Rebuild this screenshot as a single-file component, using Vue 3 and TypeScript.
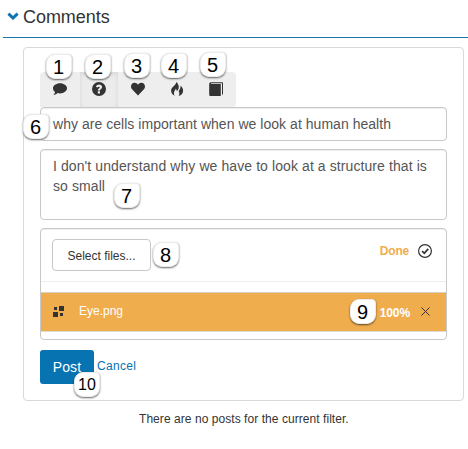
<script setup lang="ts">
import { ref } from 'vue'

interface PostType {
  label: string
  path: string
  step: number
}

const postTypes: PostType[] = [
  { label: 'Comment', step: 1, path: 'M7 1.200c3.900 0 7 2.300 7 5.100s-3.100 5.100-7 5.100c-.8 0-1.600-.1-2.300-.3C3.600 12.200 2 12.900.4 12.900c.9-.8 1.500-1.800 1.700-2.800C.8 9.200 0 7.800 0 6.300c0-2.800 3.100-5.100 7-5.100z' },
  { label: 'Question', step: 2, path: 'M7 0a7 7 0 1 1 0 14A7 7 0 0 1 7 0zM3.900 4.700l1.700.9c.3-.6.700-.9 1.300-.9.600 0 .9.300.9.700 0 .5-.4.700-.9 1.100-.7.500-1.100 1-1.100 1.900h2.200c0-.5.300-.7.800-1.100.7-.5 1.300-1.100 1.300-2.200C10.100 3.500 8.800 2.400 7.100 2.400 5.600 2.400 4.500 3.300 3.900 4.700zM5.800 9.200v2.200h2.200V9.200z' },
  { label: 'Like', step: 3, path: 'M7 13.400 1.300 7.600C.5 6.800 0 5.800 0 4.600 0 2.300 1.500.7 3.600.7 5.100.7 6.300 1.500 7 2.800c.7-1.300 1.900-2.100 3.400-2.100C12.500.7 14 2.300 14 4.600c0 1.200-.5 2.200-1.300 3z' },
  { label: 'Urgent', step: 4, path: 'M6.200 0C6.700 3 1.200 4.700 1.100 8.600c-.1 2.200 1.200 4.200 3.500 5.200C3.600 11.600 3.800 10 5 8.300c.5-.7.800-1.300.8-1.900.8.900 1 1.900.8 2.900C8.400 7.900 9 6.300 8.700 4.300 8.500 2.600 7.700 1 6.200 0zM10.500 3.600c.3 2.300-.4 3.900-1.900 5.500.9 1.400 1 3.100.1 4.900 2.600-.7 4.300-2.600 4.400-5 .1-2.200-.9-3.900-2.600-5.400z' },
  { label: 'Reference', step: 5, path: 'M2 .2h11.200c.5 0 .8.300.8.800v11.500h-1V1.300H2.400c-.6 0-.7.700 0 .7h9.400v12H1.800C.8 14 .2 13.400.2 12.400V2.200C.2 1 .9.200 2 .2z' },
]

const selected = ref(1)
const title = ref('why are cells important when we look at human health')
const body = ref(["I don't understand why we have to look at a structure that is", 'so small'])
</script>

<template>
  <main class="page">
    <header class="heading">
      <svg class="chevron" viewBox="0 0 12 8"><path d="M1.400 1.600 6 6l4.600-4.400" /></svg>
      <h1>Comments</h1>
    </header>
    <section class="panel">
      <div class="toolbar">
        <button
          v-for="(type, i) in postTypes"
          :key="type.label"
          class="type"
          :class="{ active: selected === i }"
          :aria-label="type.label"
          @click="selected = i"
        >
          <svg viewBox="0 0 14 14"><path :d="type.path" fill-rule="evenodd" /></svg>
          <span class="badge" :class="'step-' + type.step">{{ type.step }}</span>
        </button>
      </div>
      <div class="field subject"><span class="line">{{ title }}</span><span class="badge step-6">6</span></div>
      <div class="field body">
        <span v-for="line in body" :key="line" class="line">{{ line }}</span>
        <span class="badge step-7">7</span>
      </div>
      <div class="uploader">
        <div class="upload-head">
          <button class="select"><span>Select files...</span></button>
          <span class="done">Done</span>
          <svg class="check" viewBox="0 0 14 14"><circle cx="7" cy="7" r="6.400" /><path d="M4.100 7.200 6.300 9.300 10.200 4.900" /></svg>
          <span class="badge step-8">8</span>
        </div>
        <div class="file">
          <svg class="file-icon" viewBox="0 0 11 11"><path d="M1 1h3v3H1zM6 0h5v5H6zM0 6h5v5H0zM7 7h3v3H7z" /></svg>
          <span class="name">Eye.png</span>
          <span class="percent">100%</span>
          <svg class="remove" viewBox="0 0 9 9"><path d="m.5.5 8 8m0-8-8 8" /></svg>
          <span class="badge step-9">9</span>
        </div>
      </div>
      <div class="actions">
        <button class="post"><span>Post</span><span class="badge step-10">10</span></button>
        <a class="cancel">Cancel</a>
      </div>
    </section>
    <p class="empty">There are no posts for the current filter.</p>
  </main>
</template>

<style>
body {
  background: #fff;
}
</style>

<style scoped>
.page {
  box-sizing: border-box;
  width: 468px;
  height: 449px;
  overflow: hidden;
  font-family: "Liberation Sans", Arial, sans-serif;
  color: #333;
}
.page * {
  box-sizing: border-box;
}
button {
  font: inherit;
  border: 0;
  margin: 0;
  padding: 0;
}
.heading {
  display: flex;
  height: 38px;
  margin-left: 3px;
  padding: 7px 0 0 4px;
  border-bottom: 1px solid #1976a8;
}
.chevron {
  width: 12px;
  height: 8px;
  margin: 5px 4px 0 0;
  fill: none;
  stroke: #0e75b0;
  stroke-width: 3;
}
h1 {
  margin: 0;
  font-size: 18px;
  line-height: 21px;
  font-weight: 400;
  letter-spacing: -0.05px;
}
.panel {
  width: 441px;
  height: 354px;
  margin: 9px 0 0 23px;
  padding: 24px 16px 0;
  border: 1px solid #d9d9d9;
  border-radius: 4px;
}
.toolbar {
  display: flex;
  width: 196px;
  height: 35px;
  background: #eee;
  border-radius: 4px 4px 4px 0;
}
.type {
  position: relative;
  display: flex;
  justify-content: center;
  align-items: center;
  width: 38px;
  height: 35px;
  padding-bottom: 1px;
  background: transparent;
}
.type:first-child {
  width: 40px;
}
.type:nth-child(n + 3) {
  width: 39px;
}
.type.active {
  background: #ececec;
  box-shadow: inset 0 2px 5px rgba(0, 0, 0, 0.09);
}
.type svg {
  width: 14px;
  height: 14px;
  fill: #333;
}
.field {
  position: relative;
  padding: 6px 12px;
  border: 1px solid #c8c8c8;
  border-radius: 4px;
  box-shadow: inset 0 1px 1px rgba(0, 0, 0, 0.07);
  color: #555;
  font-size: 14px;
  line-height: 20px;
}
.subject {
  height: 34px;
  letter-spacing: 0.035px;
}
.body {
  display: flex;
  flex-direction: column;
  align-items: flex-start;
  height: 71px;
  margin-top: 8px;
  letter-spacing: 0.09px;
  white-space: nowrap;
}
.uploader {
  height: 112px;
  margin-top: 8px;
  border: 1px solid #c8c8c8;
  border-radius: 4px;
  box-shadow: inset 0 1px 1px rgba(0, 0, 0, 0.07);
}
.upload-head {
  position: relative;
  display: flex;
  height: 53px;
  padding: 10px 14px 0 11px;
  border-bottom: 1px solid #eee;
}
.select {
  width: 99px;
  height: 32px;
  padding-top: 1px;
  background: #fff;
  border: 1px solid #c8c8c8;
  border-radius: 4px;
  font-size: 12px;
  color: #333;
}
.done {
  margin-left: auto;
  padding-top: 4px;
  font-size: 12px;
  line-height: 16px;
  font-weight: 700;
  letter-spacing: -0.2px;
  color: #f0ad4e;
}
.check {
  width: 14px;
  height: 14px;
  margin: 5px 0 0 9px;
  fill: none;
  stroke: #333;
  stroke-width: 1.200;
}
.check path {
  stroke-width: 1.700;
}
.file {
  position: relative;
  display: flex;
  align-items: center;
  height: 40px;
  margin-top: 10px;
  padding: 0 16px 2px 12px;
  border-top: 1px solid #d8d0c4;
  border-bottom: 1px solid #e0dbd2;
  background: #f0ad4e;
  color: #fff;
  font-size: 12px;
}
.file-icon {
  width: 11px;
  height: 11px;
  fill: #333;
}
.name {
  margin-left: 15px;
}
.percent {
  margin: 3px 11px 0 auto;
  font-weight: 700;
  letter-spacing: -0.1px;
}
.remove {
  width: 9px;
  height: 9px;
  fill: none;
  stroke: #333;
}
.actions {
  display: flex;
  margin-top: 10px;
}
.post {
  position: relative;
  width: 54px;
  height: 34px;
  background: #0873b1;
  border-radius: 3px;
  color: #fff;
  font-size: 14px;
  letter-spacing: 0.15px;
}
.cancel {
  margin-left: 3px;
  padding-top: 7px;
  color: #0873b1;
  font-size: 12px;
  line-height: 18px;
  letter-spacing: 0.3px;
}
.empty {
  margin: 10px 0 0 139px;
  font-size: 12px;
  line-height: 16px;
  letter-spacing: 0.055px;
}
.badge {
  position: absolute;
  z-index: 1;
  width: 26px;
  height: 25px;
  padding-right: 1px;
  background: #fff;
  border: 1px solid #ececec;
  border-radius: 9px 4px 9px 9px;
  box-shadow: 0 1px 2px rgba(0, 0, 0, 0.6);
  color: #000;
  font-size: 20px;
  line-height: 24px;
  letter-spacing: 0;
  text-align: center;
}
.step-1 { left: 6px; top: -18px; }
.step-2 { left: 5px; top: -18px; }
.step-3 { left: 6px; top: -19px; }
.step-4 { left: 4px; top: -19px; }
.step-5 { left: 4px; top: -20px; }
.step-6 { left: -18px; top: 6px; }
.step-7 { left: 73px; top: 33px; }
.step-8 { left: 112px; top: 13px; }
.step-9 { left: 309px; top: 6px; }
.step-10 { left: 34px; top: 22px; padding-right: 0; font-size: 16px; line-height: 23px; }
</style>
